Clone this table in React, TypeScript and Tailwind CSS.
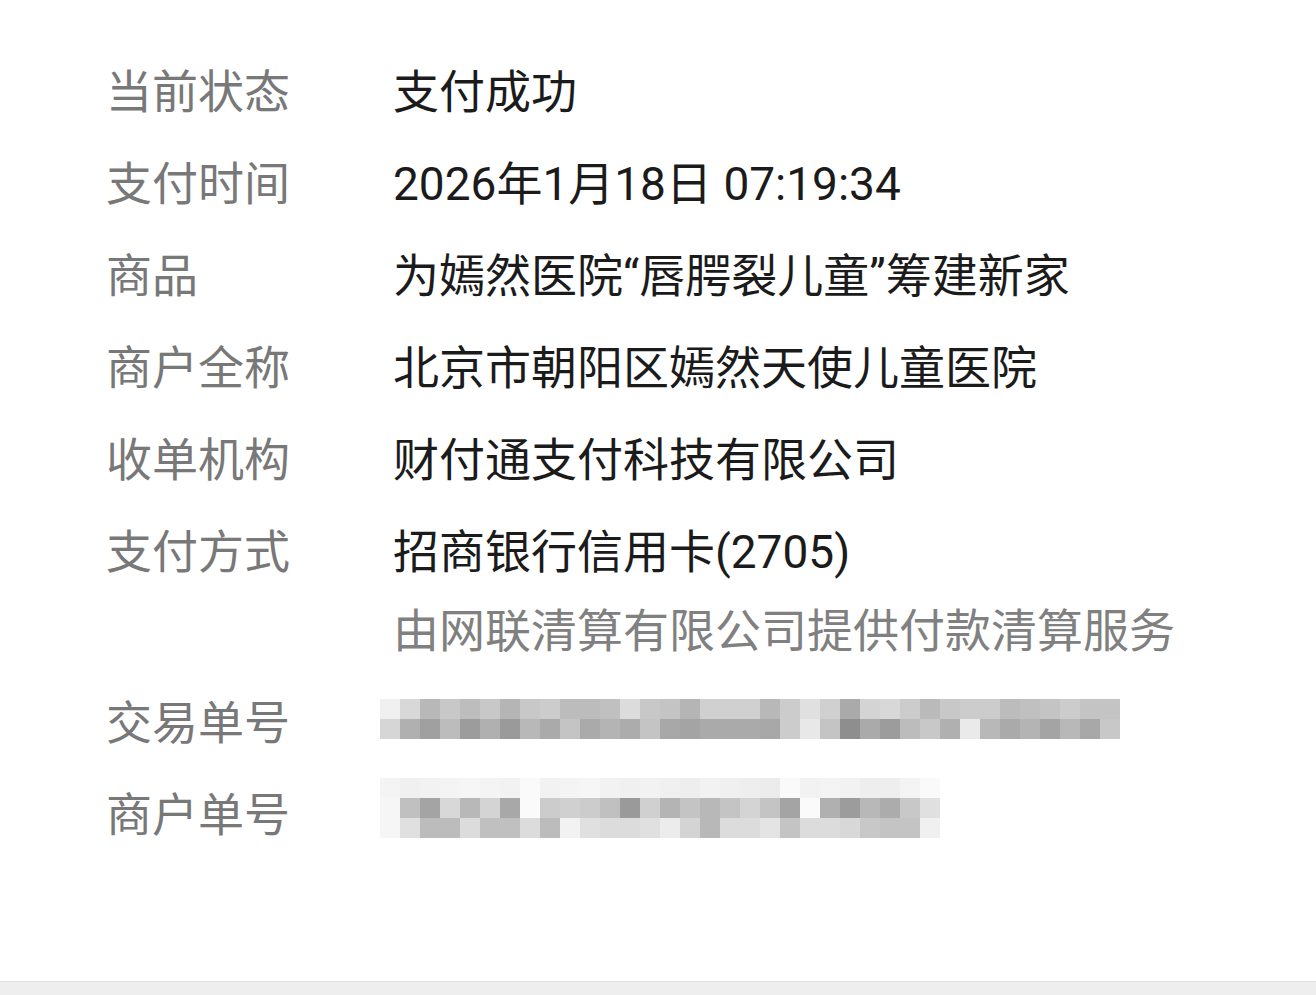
import React from "react";

const rows: { label: string; value: string; sub?: string }[] = [
  { label: "当前状态", value: "支付成功" },
  { label: "支付时间", value: "2026年1月18日 07:19:34" },
  { label: "商品", value: "为嫣然医院“唇腭裂儿童”筹建新家" },
  { label: "商户全称", value: "北京市朝阳区嫣然天使儿童医院" },
  { label: "收单机构", value: "财付通支付科技有限公司" },
  { label: "支付方式", value: "招商银行信用卡(2705)", sub: "由网联清算有限公司提供付款清算服务" },
];

// mosaic colours, one entry per 20px block
const tradeTop = [
  "#f0f0f0", "#d8d8d8", "#b8b8b8", "#c8c8c8", "#bdbdbd", "#c8c8c8", "#b5b5b5", "#c8c8c8", "#cccccc", "#bcbcbc",
  "#bcbcbc", "#c0c0c0", "#dcdcdc", "#c8c8c8", "#c4c4c4", "#b5b5b5", "#d0d0d0", "#d0d0d0", "#d0d0d0", "#b8b8b8",
  "#cccccc", "#e0e0e0", "#d0d0d0", "#aaaaaa", "#d4d4d4", "#d8d8d8", "#cccccc", "#bababa", "#c8c8c8", "#cccccc",
  "#cccccc", "#bcbcbc", "#c0c0c0", "#c4c4c4", "#cccccc", "#c4c4c4", "#c4c4c4",
];
const tradeBottom = [
  "#d6d6d6", "#b0b0b0", "#a0a0a0", "#bcbcbc", "#9c9c9c", "#b0b0b0", "#9a9a9a", "#b8b8b8", "#aaaaaa", "#c4c4c4",
  "#aaaaaa", "#b4b4b4", "#acacac", "#c4c4c4", "#a8a8a8", "#a4a4a4", "#aaaaaa", "#aaaaaa", "#aaaaaa", "#a8a8a8",
  "#cccccc", "#e8e8e8", "#c4c4c4", "#8e8e8e", "#aaaaaa", "#9c9c9c", "#bcbcbc", "#c8c8c8", "#b0b0b0", "#eaeaea",
  "#b8b8b8", "#aaaaaa", "#b4b4b4", "#a4a4a4", "#b8b8b8", "#a8a8a8", "#c8c8c8",
];

const merchTop = [
  "#f4f4f4", "#f0f0f0", "#f2f2f2", "#f4f4f4", "#f6f6f6", "#f4f4f4", "#f2f2f2", "#fafafa", "#f2f2f2", "#f4f4f4",
  "#f6f6f6", "#f2f2f2", "#f0f0f0", "#f2f2f2", "#f0f0f0", "#eeeeee", "#f2f2f2", "#f0f0f0", "#eeeeee", "#ececec",
  "#fafafa", "#f2f2f2", "#f4f4f4", "#f2f2f2", "#eeeeee", "#eeeeee", "#f4f4f4", "#fafafa",
];
const merchMid = [
  "#f6f6f6", "#c0c0c0", "#a4a4a4", "#d8d8d8", "#b8b8b8", "#d4d4d4", "#a8a8a8", "#fafafa", "#cccccc", "#d0d0d0",
  "#cccccc", "#c0c0c0", "#9a9a9a", "#d0d0d0", "#b4b4b4", "#c4c4c4", "#b8b8b8", "#c4c4c4", "#d4d4d4", "#c4c4c4",
  "#a4a4a4", "#fafafa", "#b0b0b0", "#9c9c9c", "#b8b8b8", "#acacac", "#c8c8c8", "#e0e0e0",
];
const merchBottom = [
  "#f6f6f6", "#e0e0e0", "#bcbcbc", "#bcbcbc", "#dcdcdc", "#c0c0c0", "#c0c0c0", "#dcdcdc", "#bcbcbc", "#f2f2f2",
  "#e0e0e0", "#dcdcdc", "#dcdcdc", "#e0e0e0", "#ececec", "#d4d4d4", "#b8b8b8", "#dcdcdc", "#dcdcdc", "#e4e4e4",
  "#c4c4c4", "#dcdcdc", "#dcdcdc", "#d8d8d8", "#c8c8c8", "#c4c4c4", "#c4c4c4", "#f0f0f0",
];

function Mosaic({ lines }: { lines: string[][] }) {
  return (
    <div className="flex flex-col">
      {lines.map((line, i) => (
        <div key={i} className="flex">
          {line.map((c, j) => (
            <div key={j} className="w-[20px] h-[20px]" style={{ backgroundColor: c }} />
          ))}
        </div>
      ))}
    </div>
  );
}

export default function App() {
  return (
    <div
      className="w-[1316px] h-[995px] bg-white flex flex-col"
      style={{ fontFamily: 'Roboto, "Noto Sans CJK SC", sans-serif' }}
    >
      <div className="flex-1 pl-[106px] pt-[46px] text-[46px]">
        {rows.map((r) => (
          <div key={r.label} className="flex">
            <div className="w-[287px] shrink-0 leading-[92px] text-[#787878]">{r.label}</div>
            <div className="flex flex-col">
              <div className="leading-[92px] text-[#1b1b1b]">{r.value}</div>
              {r.sub && (
                <div className="leading-[66px] pb-[13px] text-[#808080]">{r.sub}</div>
              )}
            </div>
          </div>
        ))}

        <div className="flex h-[92px]">
          <div className="w-[287px] shrink-0 leading-[92px] text-[#787878]">交易单号</div>
          <div className="-ml-[13px] pt-[22px]">
            <Mosaic lines={[tradeTop, tradeBottom]} />
          </div>
        </div>

        <div className="flex h-[92px]">
          <div className="w-[287px] shrink-0 leading-[92px] text-[#787878]">商户单号</div>
          <div className="-ml-[13px] pt-[9px]">
            <Mosaic lines={[merchTop, merchMid, merchBottom]} />
          </div>
        </div>
      </div>
      <div className="h-[14px] bg-[#eeeeee] border-t border-[#e0e0e0]" />
    </div>
  );
}
